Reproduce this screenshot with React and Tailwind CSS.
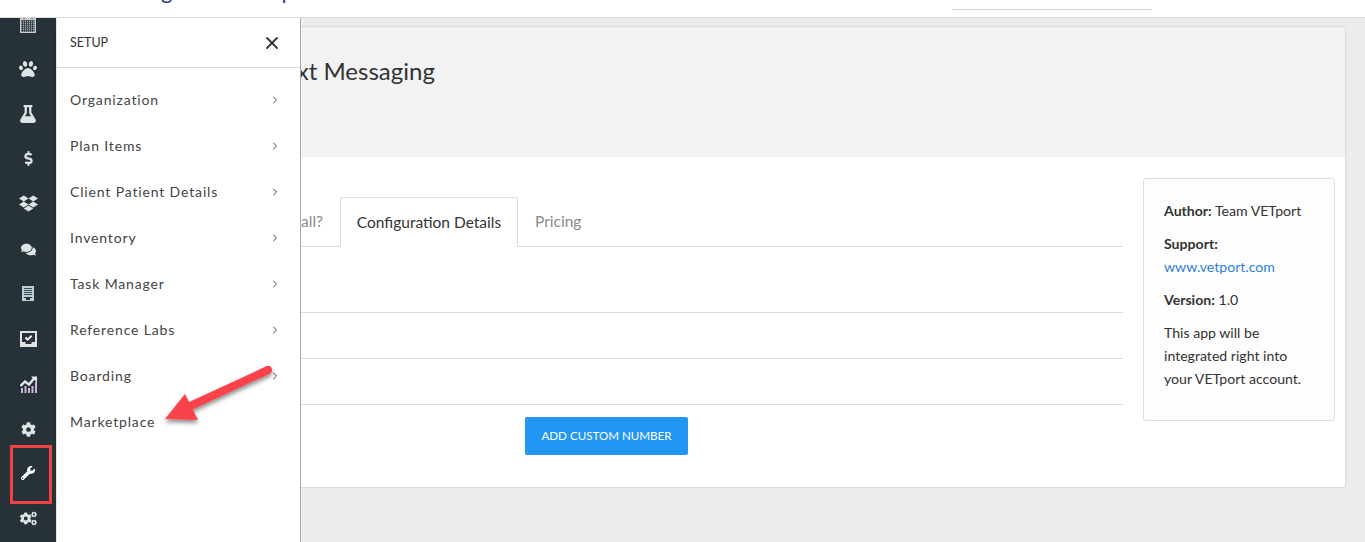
import React from "react";
import { X, ChevronRight } from "lucide-react";
import { FaPaw, FaFlask, FaDollarSign, FaDropbox, FaComments, FaCog, FaCogs, FaWrench } from "react-icons/fa";

const items = ["Organization", "Plan Items", "Client Patient Details", "Inventory", "Task Manager", "Reference Labs", "Boarding"];

function Receipt() {
  return (
    <svg width="12" height="15" viewBox="0 0 12 15" shapeRendering="crispEdges">
      <rect width="12" height="15" fill="#b9ced6" />
      <path d="M2 2h8M2 4h8M2 6h8M2 8h8" stroke="#3d4e56" strokeWidth="1" />
      <path d="M2 11h8v1h-2v2h-4v-2h-2z" fill="#263238" />
    </svg>
  );
}
function CheckBox() {
  return (
    <svg width="17" height="16" viewBox="0 0 17 16">
      <rect width="17" height="16" fill="#dfe3e4" />
      <path d="M2 2h13v9h-3.500v2h-6v-2h-3.500z" fill="#2a2f3a" />
      <path d="M5.500 6.500l2.200 2.200 4-4" stroke="#f2f2f2" strokeWidth="2" fill="none" />
    </svg>
  );
}
function Calendar() {
  return (
    <svg width="16" height="15" viewBox="0 0 16 15" shapeRendering="crispEdges">
      <rect width="16" height="15" fill="#c9cdd0" />
      <rect x="1" y="2" width="14" height="12" fill="#5b6368" />
      <path d="M1 3h14M1 5h14M1 7h14M1 9h14M1 11h14M1 13h14" stroke="#9ea4a8" strokeWidth="1" />
      <path d="M2.500 2v12M4.500 2v12M6.500 2v12M8.500 2v12M10.500 2v12M12.500 2v12" stroke="#3c454a" strokeWidth="1" />
      <rect x="3" y="0" width="2" height="1" fill="#d05a6a" />
      <rect x="11" y="0" width="2" height="1" fill="#5a7ad0" />
    </svg>
  );
}
function Chart() {
  return (
    <svg width="17" height="17" viewBox="0 0 17 17">
      <path d="M1 17v-5h2v5zM4.500 17v-7h2v7zM8 17v-5h2v5zM11.500 17v-7h2v7zM15 17v-11h2v11z" fill="#c9b6d8" />
      <path d="M0.500 10 L5 5.500 L9 8.500 L14 2.500" stroke="#e6e9ea" strokeWidth="2.400" fill="none" />
      <path d="M11 0.500 H17 V6.500 Z" fill="#e6e9ea" />
    </svg>
  );
}

function Slot({ mt, children, className = "" }) {
  return <div className={`flex h-[18px] items-center ${mt} ${className}`}>{children}</div>;
}

export default function App() {
  return (
    <div className="relative h-[542px] w-[1365px] overflow-hidden bg-[#ececec] font-['Lato',sans-serif] text-[#333]">
      <header className="h-[18px] overflow-hidden border-b border-[#dcdcdc] bg-white">
        <div className="relative flex items-start text-[22px] leading-[26px] text-[#2f3a8a]">
          <span className="mt-[-22px] ml-[161px]">g</span>
          <span className="mt-[-22px] ml-[109px]">p</span>
          <div className="absolute top-[9px] left-[952px] h-px w-[200px] bg-[#d8d8d8]" />
        </div>
      </header>

      <div className="flex h-[524px]">
        <aside className="flex w-[56px] shrink-0 flex-col items-center overflow-hidden bg-[#263238] text-[#dfe3e4]">
          <div className="flex h-[15px] items-end"><Calendar /></div>
          <Slot mt="mt-[27px]"><FaPaw size={18} /></Slot>
          <Slot mt="mt-[27px]"><FaFlask size={18} /></Slot>
          <Slot mt="mt-[26px]"><FaDollarSign size={15} /></Slot>
          <Slot mt="mt-[27px]"><FaDropbox size={19} /></Slot>
          <Slot mt="mt-[28px]"><FaComments size={15} /></Slot>
          <Slot mt="mt-[26px]"><Receipt /></Slot>
          <Slot mt="mt-[28px]"><CheckBox /></Slot>
          <Slot mt="mt-[27px]"><Chart /></Slot>
          <Slot mt="mt-[27px]"><FaCog size={15} /></Slot>
          <Slot mt="mt-[26px]" className="text-white"><FaWrench size={14} /></Slot>
          <Slot mt="mt-[27px]"><FaCogs size={17} /></Slot>
        </aside>

        <main className="min-w-0 flex-1 pt-[9px] pr-[20px]">
          <div className="h-[460px] overflow-hidden rounded-[2px] bg-white shadow-[0_0_2px_rgba(0,0,0,0.25)]">
            <div className="h-[130px] bg-[#f2f2f2] pt-[27px] pl-[20px]">
              <h1 className="pl-[197px] text-[24px] leading-[34px] text-[#333]">Text Messaging</h1>
            </div>
            <div className="flex">
              <div className="w-[1067px] shrink-0 pt-[40px]">
                <div className="flex h-[50px] border-b border-[#dddddd] pl-[180px] text-[15.500px]">
                  <div className="flex h-[50px] w-[104px] items-center justify-end pr-[17px] text-[#8a8a8a]">Why Install?</div>
                  <div className="flex h-[50px] w-[178px] items-center justify-center rounded-t-[2px] border border-b-0 border-[#dddddd] bg-white text-[#333]">Configuration Details</div>
                  <div className="flex h-[50px] items-center pl-[17px] text-[#8a8a8a]">Pricing</div>
                </div>
                <div className="h-[66px] border-b border-[#dddddd]" />
                <div className="h-[46px] border-b border-[#dddddd]" />
                <div className="h-[46px] border-b border-[#dddddd]" />
                <div className="flex pt-[12px] pl-[469px]">
                  <button className="h-[38px] w-[163px] rounded-[2px] bg-[#2196f3] text-[11.600px] text-white">ADD CUSTOM NUMBER</button>
                </div>
              </div>
              <div className="pt-[21px] pl-[20px]">
                <div className="h-[243px] w-[192px] rounded-[3px] border border-[#dddddd] bg-[#fdfdfd] px-[20px] pt-[20px] text-[14.100px] leading-[23px] text-[#333]">
                  <p><b className="font-bold">Author:</b> Team VETport</p>
                  <p className="mt-[10px] font-bold">Support:</p>
                  <p className="text-[#2d7fe0]">www.vetport.com</p>
                  <p className="mt-[10px]"><b className="font-bold">Version:</b> 1.0</p>
                  <p className="mt-[10px]">This app will be integrated right into your VETport account.</p>
                </div>
              </div>
            </div>
          </div>
        </main>
      </div>

      {/* slide-over menu */}
      <div className="absolute top-[18px] bottom-0 left-[56px] w-[245px] border-r border-l border-r-[#a9a9a9] border-l-[#e3e3e3] bg-white">
        <div className="flex h-[50px] items-center justify-between border-b border-[#dcdcdc] pr-[18px] pl-[13px]">
          <span className="pt-[2px] text-[12.500px] text-[#333]">SETUP</span>
          <X size={20} strokeWidth={2.2} className="mt-[1px] text-[#333]" />
        </div>
        <ul className="pt-[8px] text-[14px] tracking-[0.85px] text-[#444]">
          {items.map((t) => (
            <li key={t} className="flex h-[46px] items-center justify-between pr-[19px] pl-[13px]">
              <span>{t}</span>
              <ChevronRight size={12} strokeWidth={2} className="mt-[1px] text-[#444]" />
            </li>
          ))}
          <li className="flex h-[46px] items-center pl-[13px]">Marketplace</li>
        </ul>
      </div>

      {/* annotation box */}
      <div className="absolute top-[445px] left-[10px] h-[59px] w-[42px] border-[3px] border-[#f04245]" />

      {/* annotation arrow */}
      <svg className="absolute top-[360px] left-[160px]" width="120" height="70" viewBox="0 0 120 70">
        <defs>
          <filter id="s" x="-20%" y="-20%" width="140%" height="160%">
            <feDropShadow dx="0" dy="3" stdDeviation="2" floodColor="#000" floodOpacity="0.45" />
          </filter>
        </defs>
        <g filter="url(#s)" fill="#f9424a">
          <path d="M108 10 L26 48" stroke="#f9424a" strokeWidth="8" strokeLinecap="round" />
          <path d="M5 59 L25 34 L38 60 Z" />
        </g>
      </svg>
    </div>
  );
}
